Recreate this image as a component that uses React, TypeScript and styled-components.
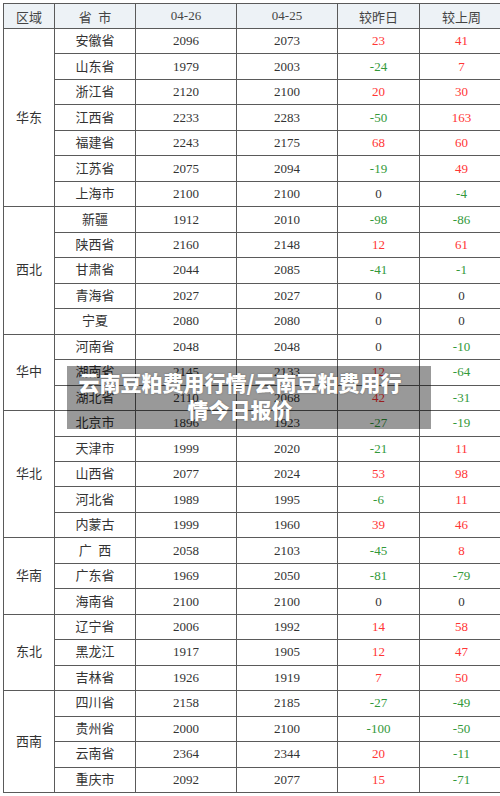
import styled, { createGlobalStyle } from "styled-components";

const GlobalStyle = createGlobalStyle`
  body {
    margin: 0;
    background: #ffffff;
    font-family: "Liberation Serif", "Noto Sans CJK SC", serif;
  }
`;

type Row = { city: string; today: number; prev: number; day: number; week: number };
type Region = { name: string; rows: Row[] };

const REGIONS: Region[] = [
  {
    name: "华东",
    rows: [
      { city: "安徽省", today: 2096, prev: 2073, day: 23, week: 41 },
      { city: "山东省", today: 1979, prev: 2003, day: -24, week: 7 },
      { city: "浙江省", today: 2120, prev: 2100, day: 20, week: 30 },
      { city: "江西省", today: 2233, prev: 2283, day: -50, week: 163 },
      { city: "福建省", today: 2243, prev: 2175, day: 68, week: 60 },
      { city: "江苏省", today: 2075, prev: 2094, day: -19, week: 49 },
      { city: "上海市", today: 2100, prev: 2100, day: 0, week: -4 },
    ],
  },
  {
    name: "西北",
    rows: [
      { city: "新疆", today: 1912, prev: 2010, day: -98, week: -86 },
      { city: "陕西省", today: 2160, prev: 2148, day: 12, week: 61 },
      { city: "甘肃省", today: 2044, prev: 2085, day: -41, week: -1 },
      { city: "青海省", today: 2027, prev: 2027, day: 0, week: 0 },
      { city: "宁夏", today: 2080, prev: 2080, day: 0, week: 0 },
    ],
  },
  {
    name: "华中",
    rows: [
      { city: "河南省", today: 2048, prev: 2048, day: 0, week: -10 },
      { city: "湖南省", today: 2145, prev: 2133, day: 12, week: -64 },
      { city: "湖北省", today: 2110, prev: 2068, day: 42, week: -31 },
    ],
  },
  {
    name: "华北",
    rows: [
      { city: "北京市", today: 1896, prev: 1923, day: -27, week: -19 },
      { city: "天津市", today: 1999, prev: 2020, day: -21, week: 11 },
      { city: "山西省", today: 2077, prev: 2024, day: 53, week: 98 },
      { city: "河北省", today: 1989, prev: 1995, day: -6, week: 11 },
      { city: "内蒙古", today: 1999, prev: 1960, day: 39, week: 46 },
    ],
  },
  {
    name: "华南",
    rows: [
      { city: "广  西", today: 2058, prev: 2103, day: -45, week: 8 },
      { city: "广东省", today: 1969, prev: 2050, day: -81, week: -79 },
      { city: "海南省", today: 2100, prev: 2100, day: 0, week: 0 },
    ],
  },
  {
    name: "东北",
    rows: [
      { city: "辽宁省", today: 2006, prev: 1992, day: 14, week: 58 },
      { city: "黑龙江", today: 1917, prev: 1905, day: 12, week: 47 },
      { city: "吉林省", today: 1926, prev: 1919, day: 7, week: 50 },
    ],
  },
  {
    name: "西南",
    rows: [
      { city: "四川省", today: 2158, prev: 2185, day: -27, week: -49 },
      { city: "贵州省", today: 2000, prev: 2100, day: -100, week: -50 },
      { city: "云南省", today: 2364, prev: 2344, day: 20, week: -11 },
      { city: "重庆市", today: 2092, prev: 2077, day: 15, week: -71 },
    ],
  },
];

const Page = styled.div`
  position: relative;
  padding: 3px;
`;

const Table = styled.table`
  width: 494px;
  border-collapse: collapse;
  table-layout: fixed;
  color: #333333;
  font-size: 13px;
`;

const HeadCell = styled.th<{ $w: number }>`
  width: ${(p) => p.$w}px;
  height: 24px;
  padding: 0;
  border: 1px solid #5a5a5a;
  background: #edf2f6;
  font-weight: normal;
  color: #444444;
  text-align: center;
  white-space: pre;
`;

const Cell = styled.td`
  height: 24.47px;
  padding: 0;
  border: 1px solid #5a5a5a;
  text-align: center;
  white-space: pre;
  line-height: 14px;
`;

const RegionCell = styled(Cell)`
  color: #333333;
`;

const DeltaCell = styled(Cell)<{ $tone: "up" | "down" | "flat" }>`
  color: ${(p) => (p.$tone === "up" ? "#ff3535" : p.$tone === "down" ? "#33993a" : "#333333")};
`;

// headline strip laid over the table
const Banner = styled.div`
  position: absolute;
  left: 67px;
  top: 366px;
  width: 364px;
  height: 63px;
  box-sizing: border-box;
  padding: 3px 22px 0 4px;
  background: rgba(0, 0, 0, 0.4);
  color: #ffffff;
  font-family: "Noto Sans CJK SC", sans-serif;
  font-weight: 900;
  font-size: 21px;
  line-height: 27px;
  text-align: center;
  text-shadow: 0 0 2px rgba(0, 0, 0, 0.35);
`;

const tone = (n: number) => (n > 0 ? "up" : n < 0 ? "down" : "flat");

const HEADERS: [string, number][] = [
  ["区域", 50],
  ["省  市", 80],
  ["04-26", 100],
  ["04-25", 100],
  ["较昨日", 81],
  ["较上周", 83],
];

const App = () => (
  <>
    <GlobalStyle />
    <Page>
      <Table>
        <thead>
          <tr>
            {HEADERS.map(([label, w]) => (
              <HeadCell key={label} $w={w}>
                {label}
              </HeadCell>
            ))}
          </tr>
        </thead>
        <tbody>
          {REGIONS.map((region) =>
            region.rows.map((row, i) => (
              <tr key={row.city}>
                {i === 0 && <RegionCell rowSpan={region.rows.length}>{region.name}</RegionCell>}
                <Cell>{row.city}</Cell>
                <Cell>{row.today}</Cell>
                <Cell>{row.prev}</Cell>
                <DeltaCell $tone={tone(row.day)}>{row.day}</DeltaCell>
                <DeltaCell $tone={tone(row.week)}>{row.week}</DeltaCell>
              </tr>
            ))
          )}
        </tbody>
      </Table>
      <Banner>云南豆粕费用行情/云南豆粕费用行情今日报价</Banner>
    </Page>
  </>
);

export default App;
